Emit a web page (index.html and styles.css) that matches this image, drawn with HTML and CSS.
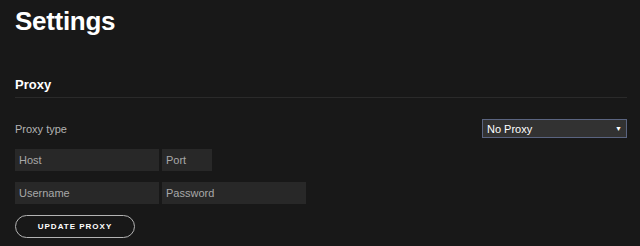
FILE: index.html
```html
<!DOCTYPE html>
<html lang="en">
<head>
    <meta charset="UTF-8">
    <title>Settings</title>
    <link rel="stylesheet" href="styles.css">
</head>
<body>
    <main class="settings">
        <h1>Settings</h1>

        <section class="proxy">
            <h2>Proxy</h2>

            <div class="row">
                <label for="proxyType">Proxy type</label>
                <div class="select">
                    <span>No Proxy</span>
                    <span class="arrow">&#9660;</span>
                </div>
            </div>

            <div class="fields">
                <input type="text" class="field wide" placeholder="Host">
                <input type="text" class="field short" placeholder="Port">
            </div>
            <div class="fields">
                <input type="text" class="field wide" placeholder="Username">
                <input type="password" class="field wide" placeholder="Password">
            </div>

            <button type="button" class="btn">Update Proxy</button>
        </section>
    </main>
</body>
</html>
```

FILE: styles.css
```css
body {
    margin: 0;
    background-color: #181818;
    color: #ffffff;
    font-family: 'Liberation Sans', Arial, sans-serif;
}

.settings {
    padding: 0 13px 0 15px;
}

h1 {
    margin: 6px 0 0;
    font-size: 26px;
    line-height: 30px;
    letter-spacing: -0.3px;
}

h2 {
    margin: 41px 0 0;
    padding-bottom: 4px;
    border-bottom: 1px solid #2a2a2a;
    font-size: 13px;
    line-height: 16px;
}

.row {
    display: flex;
    justify-content: space-between;
    align-items: center;
    margin-top: 21px;
    height: 19px;
}

.row label {
    color: #b3b3b3;
    font-size: 11px;
}

.select {
    display: flex;
    justify-content: space-between;
    align-items: center;
    box-sizing: border-box;
    width: 145px;
    height: 19px;
    padding: 0 4px 0 4px;
    background-color: #323232;
    border: 1px solid #5a6480;
    font-size: 11px;
}

.arrow {
    font-size: 7px;
}

.fields {
    display: flex;
    gap: 3px;
    margin-top: 11px;
}

.field {
    box-sizing: border-box;
    height: 22px;
    padding: 0 4px;
    border: none;
    background-color: #282828;
    color: #ffffff;
    font-family: 'Liberation Sans', Arial, sans-serif;
    font-size: 11px;
    outline: none;
}

.field::placeholder {
    color: #a8a8a8;
}

.wide {
    width: 144px;
}

.short {
    width: 50px;
}

.btn {
    display: block;
    box-sizing: border-box;
    margin-top: 11px;
    width: 120px;
    height: 23px;
    padding: 0;
    background: transparent;
    border: 1px solid #b3b3b3;
    border-radius: 12px;
    color: #ffffff;
    font-family: 'Liberation Sans', Arial, sans-serif;
    font-size: 8px;
    font-weight: bold;
    letter-spacing: 1px;
    text-transform: uppercase;
}
```
